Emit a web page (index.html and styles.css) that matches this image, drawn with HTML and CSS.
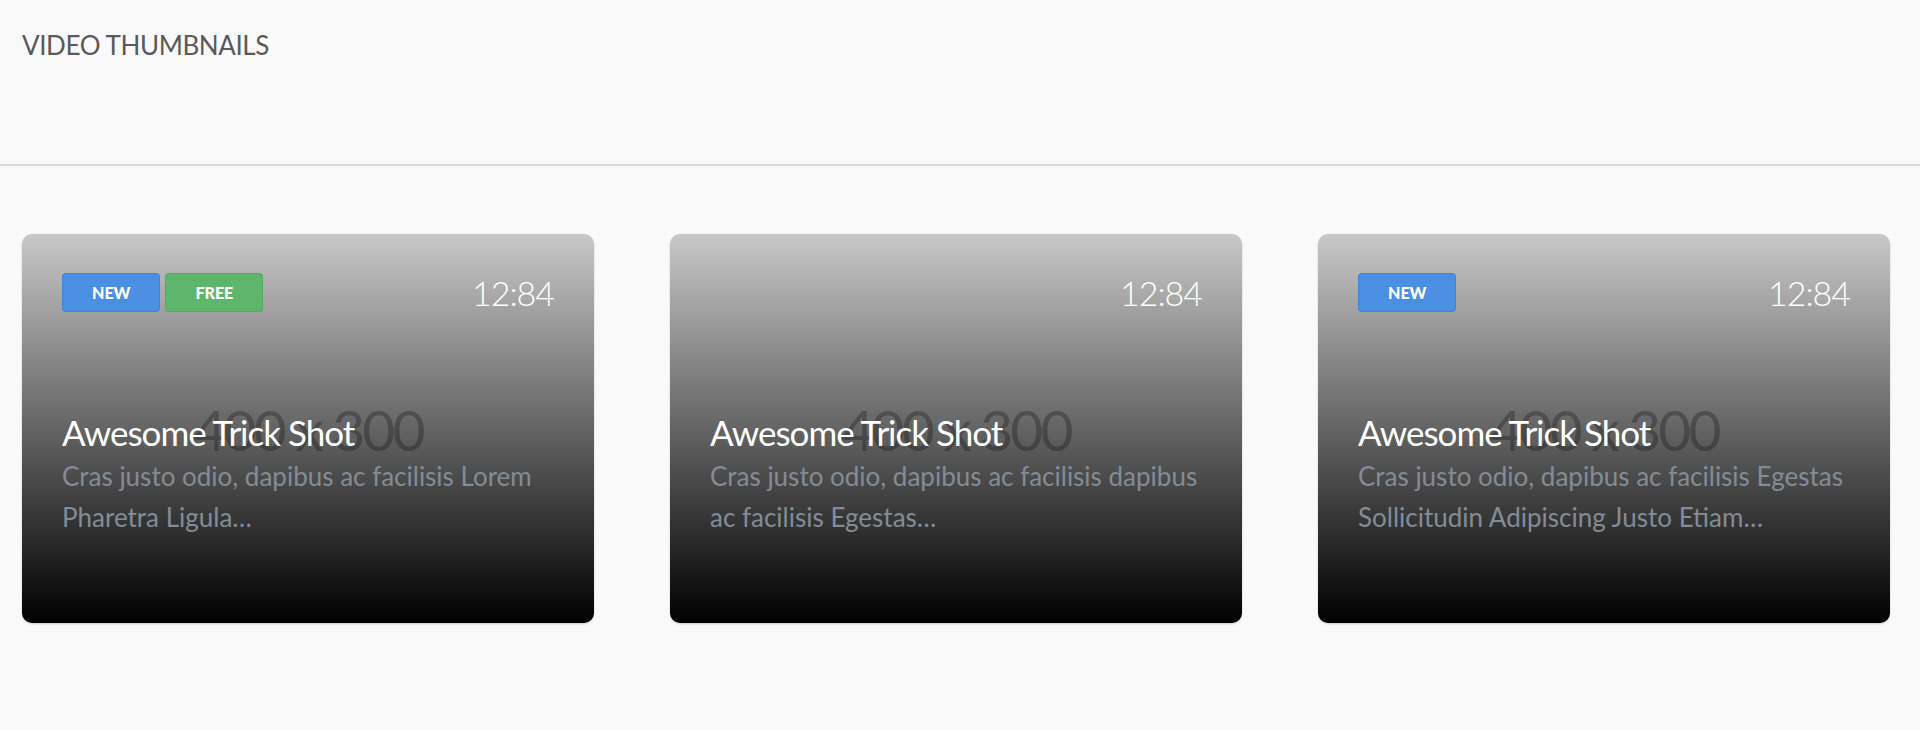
FILE: index.html
```html
<!DOCTYPE html>
<html>
<head>
    <meta charset="UTF-8">
    <title>Video Thumbnails</title>
    <link rel="stylesheet" href="styles.css">
</head>
<body>
<header class="page-head">
    <h1>Video Thumbnails</h1>
</header>

<section class="thumbs">
    <div class="thumb">
        <div class="thumb-placeholder">400 x 300</div>
        <div class="thumb-shade"></div>
        <div class="thumb-info">
            <div class="thumb-top">
                <div class="badges">
                    <span class="badge badge-new">New</span>
                    <span class="badge badge-free">Free</span>
                </div>
                <span class="duration">12:84</span>
            </div>
            <h2 class="thumb-title">Awesome Trick Shot</h2>
            <p class="thumb-text">Cras justo odio, dapibus ac facilisis Lorem Pharetra Ligula…</p>
        </div>
    </div>

    <div class="thumb">
        <div class="thumb-placeholder">400 x 300</div>
        <div class="thumb-shade"></div>
        <div class="thumb-info">
            <div class="thumb-top">
                <div class="badges"></div>
                <span class="duration">12:84</span>
            </div>
            <h2 class="thumb-title">Awesome Trick Shot</h2>
            <p class="thumb-text">Cras justo odio, dapibus ac facilisis dapibus ac facilisis Egestas…</p>
        </div>
    </div>

    <div class="thumb">
        <div class="thumb-placeholder">400 x 300</div>
        <div class="thumb-shade"></div>
        <div class="thumb-info">
            <div class="thumb-top">
                <div class="badges">
                    <span class="badge badge-new">New</span>
                </div>
                <span class="duration">12:84</span>
            </div>
            <h2 class="thumb-title">Awesome Trick Shot</h2>
            <p class="thumb-text">Cras justo odio, dapibus ac facilisis Egestas Sollicitudin Adipiscing Justo Etiam…</p>
        </div>
    </div>
</section>
</body>
</html>
```

FILE: styles.css
```css
html, body {
    margin: 0;
    height: 100%;
}

body {
    background-color: #f9f9f9;
    font-family: Lato, "Open Sans", sans-serif;
    color: #555555;
}

.page-head {
    height: 166px;
    padding: 0 22px;
    border-bottom: 2px solid #dadada;
    box-sizing: border-box;
}

.page-head h1 {
    margin: 0;
    padding-top: 28px;
    font-size: 26px;
    line-height: 34px;
    font-weight: 400;
    letter-spacing: -0.4px;
    text-transform: uppercase;
    color: #5a5a5a;
}

.thumbs {
    display: flex;
    gap: 76px;
    padding: 68px 22px 0;
}

.thumb {
    display: grid;
    width: 572px;
    height: 389px;
    flex: none;
    overflow: hidden;
    border-radius: 10px;
    background-color: #cccccc;
    box-shadow: 0 1px 2px rgba(0, 0, 0, 0.2);
}

.thumb > * {
    grid-area: 1 / 1;
}

.thumb-placeholder {
    display: flex;
    align-items: center;
    justify-content: center;
    font-size: 57px;
    font-weight: 400;
    letter-spacing: -3px;
    color: #969696;
}

.thumb-shade {
    background: linear-gradient(to bottom, rgba(0, 0, 0, 0.02), #000000);
}

.thumb-info {
    display: flex;
    flex-direction: column;
    padding: 39px 40px;
    min-width: 0;
}

.thumb-top {
    display: flex;
    justify-content: space-between;
    align-items: center;
    height: 39px;
}

.badges {
    display: flex;
    gap: 5px;
}

.badge {
    height: 39px;
    padding: 0 29px;
    box-sizing: border-box;
    border-radius: 4px;
    border: 1px solid rgba(0, 0, 0, 0.08);
    font-size: 16px;
    line-height: 37px;
    font-weight: 900;
    text-transform: uppercase;
    color: #ffffff;
}

.badge-new {
    background-color: #4a8fe1;
}

.badge-free {
    background-color: #5db66c;
}

.duration {
    font-size: 34px;
    font-weight: 300;
    letter-spacing: -1px;
    color: #ffffff;
}

.thumb-title {
    margin: 100px 0 0;
    font-size: 35px;
    line-height: 40px;
    font-weight: 400;
    letter-spacing: -1px;
    color: #ffffff;
}

.thumb-text {
    margin: 4px 0 0;
    font-size: 26px;
    line-height: 41px;
    color: #838c97;
}
```
